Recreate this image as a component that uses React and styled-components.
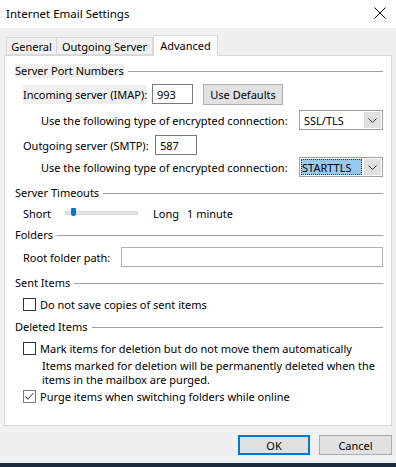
import React from 'react';
import styled, { createGlobalStyle } from 'styled-components';

const Global = createGlobalStyle`
  html, body {
    margin: 0;
    padding: 0;
    background: #f0f0f0;
  }
  body {
    font-family: "Noto Sans", "Segoe UI", sans-serif;
    font-size: 11px;
    color: #000;
  }
`;

const Window = styled.div`
  width: 396px;
  height: 467px;
  display: flex;
  flex-direction: column;
  background: #f0f0f0;
  overflow: hidden;
`;

const TitleBar = styled.div`
  height: 28px;
  background: #fff;
  display: flex;
  align-items: center;
  justify-content: space-between;
  padding: 0 8px 2px 6px;
  box-sizing: border-box;
  font-size: 11.5px;
`;

const CloseBtn = styled.div`
  width: 12px;
  height: 12px;
  margin-right: 2px;
  display: flex;
`;

const Body = styled.div`
  flex: 1;
  display: flex;
  flex-direction: column;
  padding: 7px 4px 0 4px;
`;

const TabStrip = styled.div`
  display: flex;
  align-items: flex-end;
  height: 20px;
  padding-left: 2px;
  position: relative;
  z-index: 1;
`;

const Tab = styled.div`
  width: ${p => p.$w}px;
  height: ${p => (p.$active ? 21 : 18)}px;
  box-sizing: border-box;
  display: flex;
  align-items: center;
  justify-content: center;
  white-space: nowrap;
  border: 1px solid #d9d9d9;
  border-bottom: ${p => (p.$active ? 'none' : '1px solid #d9d9d9')};
  border-left: ${p => (p.$first || p.$active ? '1px solid #d9d9d9' : 'none')};
  background: ${p => (p.$active ? '#fff' : '#f0f0f0')};
  margin-bottom: ${p => (p.$active ? -1 : 0)}px;
  padding-bottom: ${p => (p.$active ? 2 : 0)}px;
`;

const Panel = styled.div`
  height: 371px;
  box-sizing: border-box;
  background: #fff;
  border: 1px solid #d9d9d9;
  padding: 7px 8px 0 10px;
  display: flex;
  flex-direction: column;
`;

const Header = styled.div`
  display: flex;
  align-items: center;
  height: 16px;
  margin-top: ${p => p.$mt || 0}px;
  gap: 4px;
  &::after {
    content: '';
    flex: 1;
    height: 1px;
    background: #a0a0a0;
  }
`;

const HeaderText = styled.span`
  background: ${p => (p.$focus ? '#f0f0f0' : 'transparent')};
  padding: 1px 0;
  line-height: 12px;
  white-space: nowrap;
`;

const Row = styled.div`
  display: flex;
  align-items: center;
  height: ${p => p.$h || 20}px;
  margin-top: ${p => p.$mt || 0}px;
  padding-left: ${p => p.$indent || 8}px;
`;

const Label = styled.span`
  width: ${p => (p.$w ? `${p.$w}px` : 'auto')};
  margin-left: ${p => p.$ml || 0}px;
  flex-shrink: 0;
  white-space: nowrap;
`;

const LabelFocus = styled.span`
  background: #f0f0f0;
  padding: 2px 0;
`;

const TextBox = styled.div`
  width: ${p => (p.$w ? `${p.$w}px` : 'auto')};
  flex: ${p => (p.$w ? 'none' : 1)};
  height: 20px;
  box-sizing: border-box;
  border: 1px solid ${p => (p.$light ? '#adadad' : '#7a7a7a')};
  background: #fff;
  padding: 0 0 0 4px;
  display: flex;
  align-items: center;
`;

const Button = styled.div`
  width: ${p => p.$w}px;
  height: ${p => p.$h || 21}px;
  box-sizing: border-box;
  border: ${p => (p.$default ? '2px solid #0078d7' : '1px solid #adadad')};
  background: #e1e1e1;
  display: flex;
  align-items: center;
  justify-content: center;
  margin-left: ${p => p.$ml || 0}px;
`;

const Select = styled.div`
  width: 84px;
  height: 20px;
  box-sizing: border-box;
  border: 1px solid #a0a0a0;
  background: #fff;
  display: flex;
  align-items: stretch;
  padding: 1px;
`;

const SelectValue = styled.div`
  flex: 1;
  display: flex;
  align-items: center;
  padding-left: ${p => (p.$sel ? 1 : 3)}px;
  margin-right: 2px;
  background: ${p => (p.$sel ? '#99c9ef' : 'transparent')};
  outline: ${p => (p.$sel ? '1px dotted #333' : 'none')};
  outline-offset: -1px;
`;

const SelectArrow = styled.div`
  width: 17px;
  background: #e1e1e1;
  border: 1px solid #e1e1e1;
  box-sizing: border-box;
  display: flex;
  align-items: center;
  justify-content: center;
`;

const SliderTrack = styled.div`
  width: 73px;
  height: 4px;
  box-sizing: border-box;
  background: #e7e7e7;
  border: 1px solid #d6d6d6;
  position: relative;
`;

const SliderThumb = styled.div`
  position: absolute;
  left: 5px;
  top: -4px;
  width: 5px;
  height: 8px;
  border-radius: 1px 1px 2px 2px;
  background: #0078d7;
`;

const Box = styled.div`
  width: 13px;
  height: 13px;
  box-sizing: border-box;
  border: 1px solid ${p => (p.$checked ? '#7a7a7a' : '#333')};
  background: #fff;
  margin-right: 4px;
  flex-shrink: 0;
  display: flex;
  align-items: center;
  justify-content: center;
`;

const Note = styled.div`
  margin-top: 3px;
  padding-left: 27px;
  line-height: 14px;
  white-space: nowrap;
`;

const Footer = styled.div`
  display: flex;
  justify-content: flex-end;
  padding: 9px 0 0 0;
  gap: 9px;
`;

const Taskbar = styled.div`
  height: 4px;
  background: #1c2b3d;
  margin-top: auto;
`;

function Chevron() {
  return (
    <svg width="9" height="5" viewBox="0 0 9 5">
      <path d="M0.5 0.5 L4.5 4.5 L8.5 0.5" fill="none" stroke="#333" strokeWidth="1" />
    </svg>
  );
}

function Check({ checked }) {
  return (
    <Box $checked={checked}>
      {checked && (
        <svg width="11" height="11" viewBox="0 0 11 11">
          <path d="M1.5 5.5 L4 8 L9.5 2" fill="none" stroke="#555" strokeWidth="1.1" />
        </svg>
      )}
    </Box>
  );
}

function Dropdown({ value, selected }) {
  return (
    <Select>
      <SelectValue $sel={selected}>{value}</SelectValue>
      <SelectArrow>
        <Chevron />
      </SelectArrow>
    </Select>
  );
}

export default function App() {
  return (
    <Window>
      <Global />
      <TitleBar>
        <span>Internet Email Settings</span>
        <CloseBtn>
          <svg width="12" height="12" viewBox="0 0 12 12">
            <path d="M0.5 0.5 L11.5 11.5 M11.5 0.5 L0.5 11.5" stroke="#000" strokeWidth="1" />
          </svg>
        </CloseBtn>
      </TitleBar>
      <Body>
        <TabStrip>
          <Tab $w={51} $first>General</Tab>
          <Tab $w={96}>Outgoing Server</Tab>
          <Tab $w={65} $active>Advanced</Tab>
        </TabStrip>
        <Panel>
          <Header>
            <HeaderText $focus>Server Port Numbers</HeaderText>
          </Header>
          <Row $mt={5}>
            <Label $w={129}><LabelFocus>Incoming server (IMAP):</LabelFocus></Label>
            <TextBox $w={41}>993</TextBox>
            <Button $w={80} $ml={10}>Use Defaults</Button>
          </Row>
          <Row $mt={6} $indent={26}>
            <Label $w={258}>Use the following type of encrypted connection:</Label>
            <Dropdown value="SSL/TLS" />
          </Row>
          <Row $mt={5}>
            <Label $w={132}>Outgoing server (SMTP):</Label>
            <TextBox $w={42}>587</TextBox>
          </Row>
          <Row $mt={2} $indent={26}>
            <Label $w={258}>Use the following type of encrypted connection:</Label>
            <Dropdown value="STARTTLS" selected />
          </Row>

          <Header $mt={8}>
            <HeaderText>Server Timeouts</HeaderText>
          </Header>
          <Row $mt={4} $h={16}>
            <Label $w={42}>Short</Label>
            <SliderTrack>
              <SliderThumb />
            </SliderTrack>
            <Label $w={34} $ml={15}>Long</Label>
            <Label>1 minute</Label>
          </Row>

          <Header $mt={6}>
            <HeaderText>Folders</HeaderText>
          </Header>
          <Row $mt={4}>
            <Label $w={98}>Root folder path:</Label>
            <TextBox $light />
          </Row>

          <Header $mt={8}>
            <HeaderText>Sent Items</HeaderText>
          </Header>
          <Row $mt={5} $h={16}>
            <Check />
            <Label>Do not save copies of sent items</Label>
          </Row>

          <Header $mt={7}>
            <HeaderText>Deleted Items</HeaderText>
          </Header>
          <Row $mt={5} $h={16}>
            <Check />
            <Label>Mark items for deletion but do not move them automatically</Label>
          </Row>
          <Note>
            Items marked for deletion will be permanently deleted when the
            <br />
            items in the mailbox are purged.
          </Note>
          <Row $mt={1} $h={16}>
            <Check checked />
            <Label>Purge items when switching folders while online</Label>
          </Row>
        </Panel>
        <Footer>
          <Button $w={72} $h={20} $default>OK</Button>
          <Button $w={73} $h={20}>Cancel</Button>
        </Footer>
      </Body>
      <Taskbar />
    </Window>
  );
}
